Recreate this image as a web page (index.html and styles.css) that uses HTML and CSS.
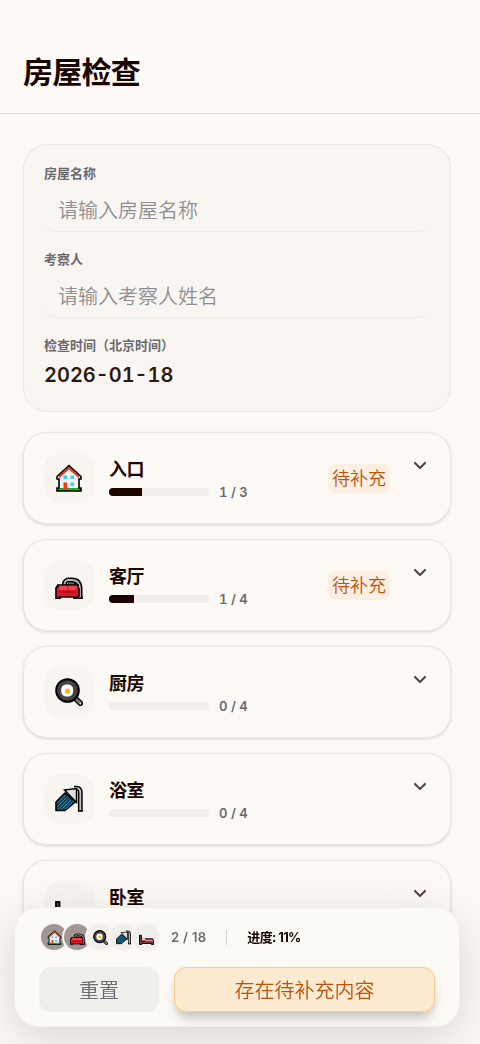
FILE: index.html
```
<!DOCTYPE html>
<html lang="zh-CN">
<head>
    <meta charset="UTF-8">
    <meta name="viewport" content="width=device-width, initial-scale=1.0">
    <title>房屋检查</title>
    <link rel="stylesheet" href="styles.css">
</head>
<body>
    <svg class="sprite" aria-hidden="true">
        <symbol id="icon-house" viewBox="0 0 28 28">
            <path d="M4 12v12H2v3h24v-3h-2V12L14 3z" fill="#f3f3f7"/>
            <path d="M2 24h24v3H2z" fill="#19b219"/>
            <path d="M4 13L14 4l10 9" fill="none" stroke="#f03a17" stroke-width="2.200"/>
            <path d="M8.500 11.500H12V15H8.500zM15.500 11.500H19V15h-3.500zM15.500 18.500H19V22h-3.500z" fill="#32d0f7"/>
            <path d="M8.500 18.500H12V26H8.500z" fill="#f03a17"/>
            <path d="M14 1.500L2 12.500V15h2v9H2v3h24v-3h-2v-9h2v-2.500z" fill="none" stroke="#000" stroke-width="1.600"/>
        </symbol>
        <symbol id="icon-sofa" viewBox="0 0 28 28">
            <path d="M9.500 15v-2a4 4 0 0 1 4-4h3c6 0 8.500 3 8.500 9v8" fill="none" stroke="#000" stroke-width="5"/>
            <path d="M9.500 15v-2a4 4 0 0 1 4-4h3c6 0 8.500 3 8.500 9v9" fill="none" stroke="#b8b8bc" stroke-width="1.800"/>
            <path d="M12.500 14l1.500-2h5l2 2z" fill="#eee" stroke="#000"/>
            <path d="M3 14h20v12H3z" fill="#e81224" stroke="#000" stroke-width="1.600"/>
            <path d="M3.800 14.800h18.400V19H3.800z" fill="#f04552"/>
            <path d="M4 20h18v2H4z" fill="#b50f1d"/>
            <path d="M12.500 14.500h1v5h-1z" fill="#b50f1d"/>
            <path d="M.800 16.500h3.500v9H.800zM20.500 16.500H24v9h-3.500z" fill="#e81224"/>
            <path d="M1 26V17l2-3M24 26v-9M1 25v2.200h4V26M19 26v1.200h8V25" fill="none" stroke="#000" stroke-width="1.600"/>
        </symbol>
        <symbol id="icon-pan" viewBox="0 0 28 28">
            <path d="M20 20l5.300 5.300" stroke="#000" stroke-width="5.500" stroke-linecap="round"/>
            <path d="M20 20l5.300 5.300" stroke="#77777a" stroke-width="3" stroke-linecap="round"/>
            <circle cx="12.500" cy="12.500" r="11.300" fill="#444447" stroke="#000" stroke-width="2"/>
            <path d="M12 6.500c4-.500 6.500 2 6.200 6 0 4-2 6-6 6s-6-2-6-6c0-4 2-6 5.800-6z" fill="#fff"/>
            <circle cx="12.500" cy="13" r="2.600" fill="#ffb900"/>
            <circle cx="25.200" cy="25.200" r=".700" fill="#fff"/>
        </symbol>
        <symbol id="icon-shower" viewBox="0 0 28 28">
            <path d="M10 8l-9 9v8.500h9l11-9z" fill="#123c4d" stroke="#000" stroke-width="1.600" stroke-linejoin="round"/>
            <path d="M10.500 10L2 18.500M12.500 11.500L2 22M14 13.500L3 24.500M16 15l-9.500 9.500M18.500 16L10 24.500" stroke="#2797c1" stroke-width="1"/>
            <path d="M25.300 26V7.500c0-3-1-4.300-4-4.300H19" fill="none" stroke="#000" stroke-width="4.800"/>
            <path d="M25.300 25.500V7.500c0-3-1-4.300-4-4.300H19" fill="none" stroke="#c5c5c9" stroke-width="1.800"/>
            <path d="M9.500 5L21.500 3.500v14z" fill="#dedee2" stroke="#000" stroke-width="1.500"/>
            <path d="M23 26h5" stroke="#000" stroke-width="1.600"/>
        </symbol>
        <symbol id="icon-bed" viewBox="0 0 28 28">
            <path d="M1 9.800h3.500V19H27v8h-4v-2H5v2H1z" fill="#69463d" stroke="#000" stroke-width="1.800"/>
            <path d="M5 16h21v5H5z" fill="#e81224" stroke="#000" stroke-width="1.200"/>
            <path d="M5.500 15.600h6V19h-6z" fill="#f4f4f6"/>
            <path d="M11.500 19.500H26V21H11.500z" fill="#f4f4f6"/>
        </symbol>
        <symbol id="icon-chevron" viewBox="0 0 24 24">
            <path d="M6 9.500l6 6 6-6" fill="none" stroke="currentColor" stroke-width="2.500" stroke-linecap="round" stroke-linejoin="round"/>
        </symbol>
    </svg>

    <header class="header">
        <h1>房屋检查</h1>
    </header>

    <main class="content">
        <form class="info-card">
            <div class="field">
                <label for="houseName">房屋名称</label>
                <input type="text" id="houseName" placeholder="请输入房屋名称">
            </div>
            <div class="field">
                <label for="inspector">考察人</label>
                <input type="text" id="inspector" placeholder="请输入考察人姓名">
            </div>
            <div class="field">
                <span class="label">检查时间（北京时间）</span>
                <time class="date" datetime="2026-01-18">2026-01-18</time>
            </div>
        </form>

        <div class="rooms">
            <section class="room">
                <div class="room-icon"><svg><use href="#icon-house"/></svg></div>
                <div class="room-info">
                    <h2>入口</h2>
                    <div class="room-progress">
                        <div class="bar"><div class="bar-fill" style="width: 33%"></div></div>
                        <span class="count">1 / 3</span>
                    </div>
                </div>
                <span class="badge">待补充</span>
                <button class="toggle" aria-label="展开入口"><svg><use href="#icon-chevron"/></svg></button>
            </section>
            <section class="room">
                <div class="room-icon"><svg><use href="#icon-sofa"/></svg></div>
                <div class="room-info">
                    <h2>客厅</h2>
                    <div class="room-progress">
                        <div class="bar"><div class="bar-fill" style="width: 25%"></div></div>
                        <span class="count">1 / 4</span>
                    </div>
                </div>
                <span class="badge">待补充</span>
                <button class="toggle" aria-label="展开客厅"><svg><use href="#icon-chevron"/></svg></button>
            </section>
            <section class="room">
                <div class="room-icon"><svg><use href="#icon-pan"/></svg></div>
                <div class="room-info">
                    <h2>厨房</h2>
                    <div class="room-progress">
                        <div class="bar"></div>
                        <span class="count">0 / 4</span>
                    </div>
                </div>
                <button class="toggle" aria-label="展开厨房"><svg><use href="#icon-chevron"/></svg></button>
            </section>
            <section class="room">
                <div class="room-icon"><svg><use href="#icon-shower"/></svg></div>
                <div class="room-info">
                    <h2>浴室</h2>
                    <div class="room-progress">
                        <div class="bar"></div>
                        <span class="count">0 / 4</span>
                    </div>
                </div>
                <button class="toggle" aria-label="展开浴室"><svg><use href="#icon-chevron"/></svg></button>
            </section>
            <section class="room">
                <div class="room-icon"><svg><use href="#icon-bed"/></svg></div>
                <div class="room-info">
                    <h2>卧室</h2>
                    <div class="room-progress">
                        <div class="bar"></div>
                        <span class="count">0 / 3</span>
                    </div>
                </div>
                <button class="toggle" aria-label="展开卧室"><svg><use href="#icon-chevron"/></svg></button>
            </section>
        </div>
    </main>

    <footer class="footer">
        <div class="summary">
            <div class="avatars">
                <span class="avatar active"><svg><use href="#icon-house"/></svg></span>
                <span class="avatar active"><svg><use href="#icon-sofa"/></svg></span>
                <span class="avatar"><svg><use href="#icon-pan"/></svg></span>
                <span class="avatar"><svg><use href="#icon-shower"/></svg></span>
                <span class="avatar"><svg><use href="#icon-bed"/></svg></span>
            </div>
            <span class="total">2 / 18</span>
            <span class="divider"></span>
            <span class="percent">进度: 11%</span>
        </div>
        <div class="actions">
            <button class="btn btn-reset">重置</button>
            <button class="btn btn-submit">存在待补充内容</button>
        </div>
    </footer>
</body>
</html>
```
FILE: styles.css
```
* {
    box-sizing: border-box;
}
html {
    scrollbar-width: none;
}
body {
    margin: 0;
    font-family: Inter, "Noto Sans CJK SC", sans-serif;
    background-color: #fdf9f4;
    color: #1a0500;
}
h1, h2 {
    margin: 0;
    font-weight: 700;
    letter-spacing: -0.025em;
}
.sprite {
    display: none;
}
.header {
    padding: 52px 23px 20px;
    border-bottom: 1px solid #dedad6;
}
h1 {
    font-size: 30px;
    line-height: 41px;
}
.content {
    padding: 30px 29px 90px 23px;
}
.info-card {
    display: flex;
    flex-direction: column;
    gap: 19px;
    padding: 20px;
    border: 1px solid #ebe7e3;
    border-radius: 24px;
    background-color: #f9f6f1;
}
.field {
    display: flex;
    flex-direction: column;
    gap: 7px;
}
.field label,
.field .label {
    font-size: 13px;
    line-height: 16px;
    font-weight: 600;
    color: #6b6a70;
}
.field input {
    height: 44px;
    padding: 2px 14px 0;
    border: 0;
    border-bottom: 1px solid #efece8;
    border-radius: 12px;
    background: transparent;
    font: inherit;
    font-size: 20px;
    font-weight: 350;
    color: #1a0500;
    outline: none;
}
.field input::placeholder {
    color: #8f8e93;
}
.date {
    font-size: 20px;
    line-height: 31px;
    font-weight: 600;
    font-variant-numeric: tabular-nums;
    color: #2c1810;
}
.rooms {
    display: flex;
    flex-direction: column;
    gap: 15px;
    margin-top: 20px;
}
.room {
    display: flex;
    align-items: center;
    padding: 20px;
    border: 1px solid #ebe7e3;
    border-radius: 24px;
    box-shadow: 0 1px 3px rgba(0, 0, 0, 0.15);
    background-color: #fdf9f4;
}
.room-icon {
    display: flex;
    align-items: center;
    justify-content: center;
    width: 50px;
    height: 50px;
    margin-right: 15px;
    border-radius: 16px;
    background-color: #f8f5f0;
}
.room-icon svg {
    width: 28px;
    height: 28px;
}
.room-info {
    flex: 1;
    padding-top: 2px;
}
h2 {
    font-size: 18px;
    line-height: 26px;
}
.room-progress {
    display: flex;
    align-items: center;
    gap: 10px;
}
.bar {
    width: 100px;
    height: 8px;
    border-radius: 4px;
    overflow: hidden;
    background-color: #f2efeb;
}
.bar-fill {
    height: 100%;
    background-color: #1a0500;
}
.count,
.total {
    font-size: 13px;
    line-height: 18px;
    font-weight: 600;
    color: #6b6a70;
}
.count {
    font-variant-numeric: tabular-nums;
}
.total {
    letter-spacing: 0.025em;
}
.badge {
    padding: 1px 4px 0;
    border-radius: 8px;
    background-color: #fdf0e3;
    font-size: 18px;
    line-height: 28px;
    font-weight: 350;
    color: #bf5209;
}
.toggle {
    align-self: flex-start;
    width: 20px;
    height: 24px;
    margin-left: 20px;
    padding: 0;
    border: 0;
    background: none;
    color: #54443f;
    cursor: pointer;
}
.toggle svg {
    display: block;
    width: 20px;
    height: 20px;
}
.footer {
    position: fixed;
    left: 14px;
    right: 20px;
    bottom: 17px;
    display: flex;
    flex-direction: column;
    gap: 15px;
    padding: 14px 24px;
    border: 1px solid #f1eeea;
    border-radius: 24px;
    background-color: #fcfaf5;
    box-shadow: 0 12px 50px rgba(0, 0, 0, 0.15);
}
.summary {
    display: flex;
    align-items: center;
}
.avatars {
    display: flex;
    margin-right: 10px;
}
.avatar {
    display: flex;
    align-items: center;
    justify-content: center;
    width: 30px;
    height: 30px;
    border: 2px solid #f8f5f0;
    border-radius: 50%;
    background-color: #f1efeb;
}
.avatar + .avatar {
    margin-left: -7px;
}
.avatar.active {
    background-color: #a19691;
}
.avatar svg {
    width: 15px;
    height: 15px;
}
.divider {
    width: 1px;
    height: 15px;
    margin: 0 20px;
    background-color: #d6d3cf;
}
.percent {
    font-size: 13px;
    line-height: 18px;
    font-weight: 700;
    letter-spacing: -0.05em;
}
.actions {
    display: flex;
    gap: 15px;
}
.btn {
    height: 45px;
    border: 0;
    border-radius: 12px;
    font: inherit;
    font-size: 20px;
    font-weight: 350;
    cursor: pointer;
}
.btn-reset {
    width: 120px;
    background-color: #f1efeb;
    color: #6b6a70;
}
.btn-submit {
    flex: 1;
    border: 1px solid #fccb85;
    background-color: #fdebd1;
    box-shadow: 0 8px 12px -3px rgba(0, 0, 0, 0.25);
    color: #bf5209;
}
```
